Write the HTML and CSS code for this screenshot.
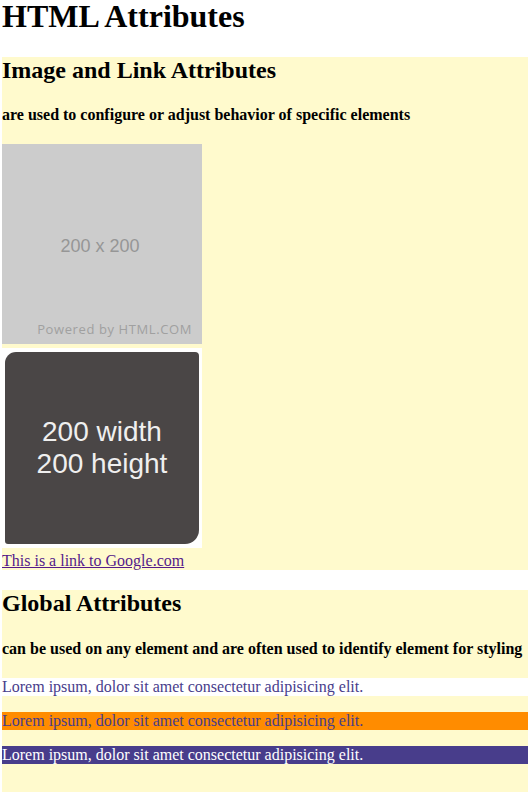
FILE: index.html
```html
<!DOCTYPE html>
<html>
<head>
<meta charset="utf-8">
<title>HTML Attributes</title>
<link rel="stylesheet" href="styles.css">
</head>
<body>
<h1 class="title">HTML Attributes</h1>
<section class="panel panel-first">
  <h2 class="panel-title">Image and Link Attributes</h2>
  <h4 class="panel-sub">are used to configure or adjust behavior of specific elements</h4>
  <div class="placeholder">
    <span class="placeholder-size">200 x 200</span>
    <span class="placeholder-credit">Powered by HTML.COM</span>
  </div>
  <div class="sized">
    <div class="sized-inner">200 width<br>200 height</div>
  </div>
  <a class="link" href="#">This is a link to Google.com</a>
</section>
<section class="panel panel-second">
  <h2 class="panel-title">Global Attributes</h2>
  <h4 class="panel-sub">can be used on any element and are often used to identify element for styling</h4>
  <p class="lorem lorem-white">Lorem ipsum, dolor sit amet consectetur adipisicing elit.</p>
  <p class="lorem lorem-orange">Lorem ipsum, dolor sit amet consectetur adipisicing elit.</p>
  <p class="lorem lorem-purple">Lorem ipsum, dolor sit amet consectetur adipisicing elit.</p>
</section>
</body>
</html>
```
FILE: styles.css
```css
body {
  margin: 0 2px;
  font-family: "Liberation Serif", "Times New Roman", serif;
  font-size: 16px;
  color: #000;
  background: #fff;
}

.title {
  margin: 0 0 24px;
  font-size: 32px;
  line-height: 33px;
  font-weight: bold;
}

.panel {
  background: #fffacd;
}

.panel-second {
  margin-top: 20px;
  padding-bottom: 40px;
}

.panel-title {
  margin: 0;
  font-size: 24px;
  font-weight: bold;
}

.panel-sub {
  margin: 22px 0 20px;
  font-size: 16px;
  font-weight: bold;
}

.panel-second .panel-sub {
  margin-top: 23px;
  margin-bottom: 20px;
}

.placeholder {
  width: 200px;
  height: 200px;
  background: #cccccc;
  margin-bottom: 4px;
  display: flex;
  flex-direction: column;
  align-items: center;
  justify-content: center;
  position: relative;
  padding-top: 5px;
  box-sizing: border-box;
}

.placeholder-size {
  font-family: "Liberation Sans", Arial, sans-serif;
  font-size: 18px;
  color: #969696;
  margin-left: -4px;
}

.placeholder-credit {
  position: absolute;
  right: 10px;
  bottom: 6px;
  font-family: "Open Sans", "DejaVu Sans", sans-serif;
  font-size: 13px;
  color: #a0a0a0;
  letter-spacing: 0.6px;
}

.sized {
  width: 200px;
  height: 200px;
  background: #fff;
  margin-bottom: 4px;
  display: flex;
  padding: 4px 3px;
  box-sizing: border-box;
}

.sized-inner {
  flex: 1;
  background: #4a4646;
  border-radius: 11px 4px 14px 3px;
  color: #efefef;
  font-family: "Liberation Sans", Arial, sans-serif;
  font-size: 28px;
  line-height: 32px;
  display: flex;
  align-items: center;
  justify-content: center;
  text-align: center;
}

.link {
  display: block;
  color: #551a8b;
  text-decoration: underline;
  line-height: 18px;
}

.lorem {
  margin: 0 0 16px;
  line-height: 18px;
  color: #483d8b;
}

.lorem-white {
  background: #fff;
}

.lorem-orange {
  background: #ff8c00;
}

.lorem-purple {
  background: #483d8b;
  color: #fff;
}
```
